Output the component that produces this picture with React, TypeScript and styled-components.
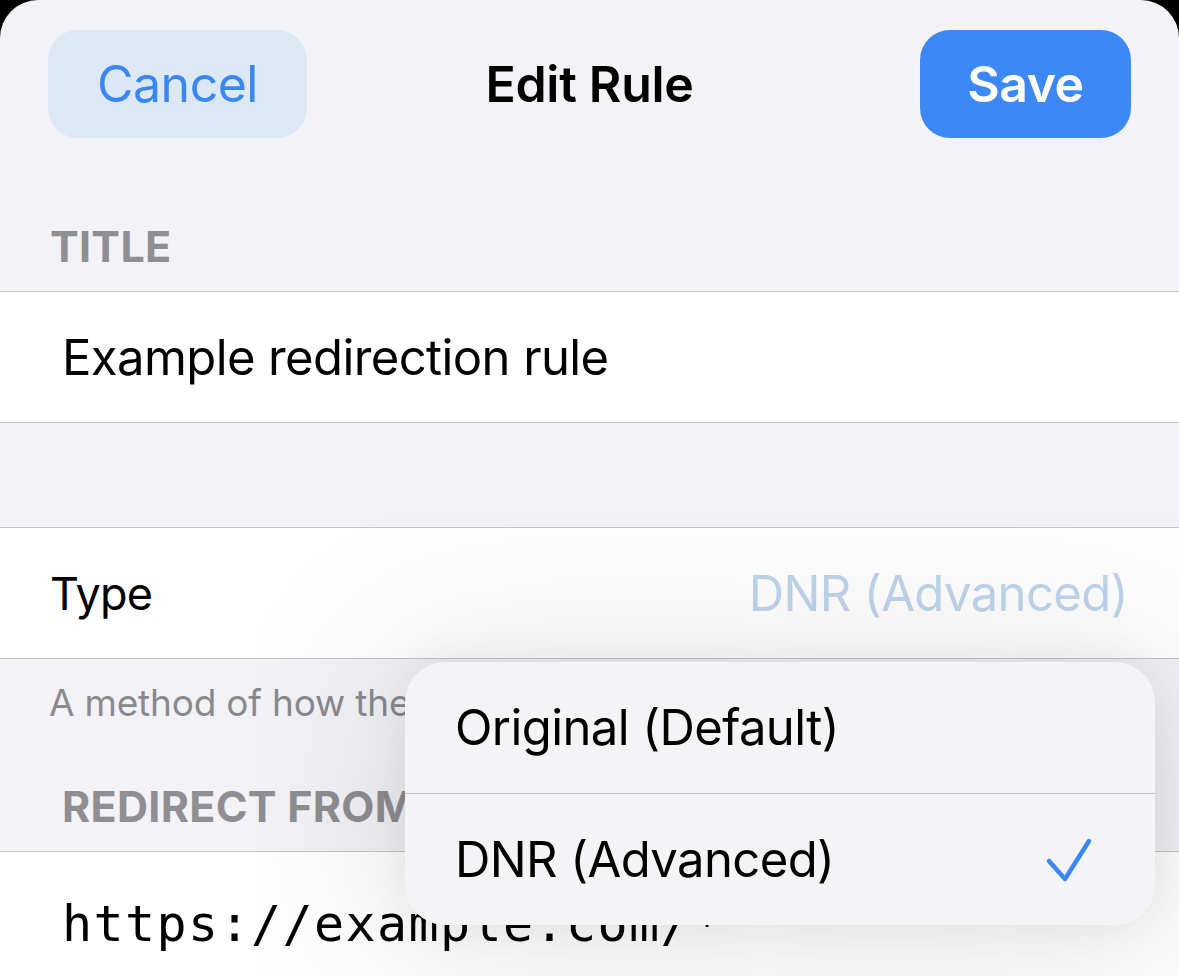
import React from "react";
import styled, { createGlobalStyle } from "styled-components";

const Global = createGlobalStyle`
  html, body { margin: 0; padding: 0; background: #000; }
  body { font-family: Inter, "Noto Sans", sans-serif; -webkit-font-smoothing: antialiased; }
  #root { width: 1179px; height: 976px; overflow: hidden; }
`;

const Sheet = styled.div`
  position: relative;
  width: 1179px;
  height: 976px;
  background: #f2f2f7;
  border-radius: 38px 38px 0 0;
  overflow: hidden;
`;

const NavBar = styled.div`
  display: grid;
  grid-template-columns: 1fr auto 1fr;
  align-items: center;
  padding: 30px 48px 0;
  height: 108px;
`;

const NavButton = styled.button<{ $primary?: boolean }>`
  justify-self: ${(p) => (p.$primary ? "end" : "start")};
  height: 108px;
  width: ${(p) => (p.$primary ? "211px" : "259px")};
  border: none;
  border-radius: 30px;
  background: ${(p) => (p.$primary ? "#3c89f5" : "#dce8f6")};
  color: ${(p) => (p.$primary ? "#ffffff" : "#3a87f3")};
  font-family: Inter, sans-serif;
  font-size: 50px;
  font-weight: ${(p) => (p.$primary ? 600 : 400)};
  letter-spacing: -0.5px;
  padding: 0;
`;

const NavTitle = styled.div`
  font-size: 50px;
  font-weight: 600;
  color: #000;
  letter-spacing: -0.3px;
`;

const SectionHeader = styled.div<{ $height: number; $inset: number }>`
  height: ${(p) => p.$height}px;
  display: flex;
  align-items: flex-end;
  box-sizing: border-box;
  padding: 0 0 23px ${(p) => p.$inset}px;
  font-size: 43px;
  line-height: 44px;
  font-weight: 700;
  color: #8e8e93;
  text-transform: uppercase;
  letter-spacing: 0.3px;
`;

const Group = styled.div`
  background: #ffffff;
  border-top: 1px solid #c6c6c8;
  border-bottom: 1px solid #c6c6c8;
`;

const Cell = styled.div<{ $inset: number }>`
  height: 130px;
  display: flex;
  align-items: center;
  justify-content: space-between;
  padding: 0 51px 0 ${(p) => p.$inset}px;
  font-size: 49px;
  color: #000;
  letter-spacing: -0.6px;
`;

const CellLabel = styled.span`
  font-size: 45px;
  letter-spacing: -0.8px;
`;

const CellValue = styled.span`
  color: #bfd5ed;
`;

const MonoText = styled.span`
  font-family: "DejaVu Sans Mono", "Liberation Mono", monospace;
  font-size: 50px;
  letter-spacing: 1.4px;
  padding-top: 14px;
`;

const Spacer = styled.div<{ $h: number }>`
  height: ${(p) => p.$h}px;
`;

const Footer = styled.div`
  padding: 22px 0 0 49px;
  height: 60px;
  font-size: 37px;
  line-height: 44px;
  color: #8a8a8e;
  letter-spacing: -0.2px;
  white-space: nowrap;
`;

const Menu = styled.div`
  position: absolute;
  left: 405px;
  top: 662px;
  width: 750px;
  background: #f4f4f6;
  border-radius: 40px;
  box-shadow: 0 10px 180px 30px rgba(0, 0, 0, 0.1), 0 0 40px rgba(0, 0, 0, 0.06);
  overflow: hidden;
`;

const MenuItem = styled.div<{ $divider?: boolean }>`
  height: 131px;
  display: flex;
  align-items: center;
  justify-content: space-between;
  padding: 0 62px 0 50px;
  font-size: 49px;
  color: #000;
  letter-spacing: -0.6px;
  border-bottom: ${(p) => (p.$divider ? "1px solid #c6c6c8" : "none")};
`;

const Check = () => (
  <svg width="48" height="46" viewBox="0 0 48 46" fill="none">
    <path d="M4 24 L20 42 L44 4" stroke="#3b88f4" strokeWidth="4.5" strokeLinecap="round" strokeLinejoin="round" />
  </svg>
);

export default function App() {
  return (
    <>
      <Global />
      <Sheet>
        <NavBar>
          <NavButton>Cancel</NavButton>
          <NavTitle>Edit Rule</NavTitle>
          <NavButton $primary>Save</NavButton>
        </NavBar>
        <SectionHeader $height={153} $inset={50}>Title</SectionHeader>
        <Group>
          <Cell $inset={62}>Example redirection rule</Cell>
        </Group>
        <Spacer $h={104} />
        <Group>
          <Cell $inset={50}>
            <CellLabel>Type</CellLabel>
            <CellValue>DNR (Advanced)</CellValue>
          </Cell>
        </Group>
        <Footer>A method of how the rule is applied</Footer>
        <SectionHeader $height={110} $inset={62}>Redirect From</SectionHeader>
        <Group>
          <Cell $inset={62}>
            <MonoText>https://example.com/*</MonoText>
          </Cell>
        </Group>
        <Menu>
          <MenuItem $divider>Original (Default)</MenuItem>
          <MenuItem>
            <span>DNR (Advanced)</span>
            <Check />
          </MenuItem>
        </Menu>
      </Sheet>
    </>
  );
}
